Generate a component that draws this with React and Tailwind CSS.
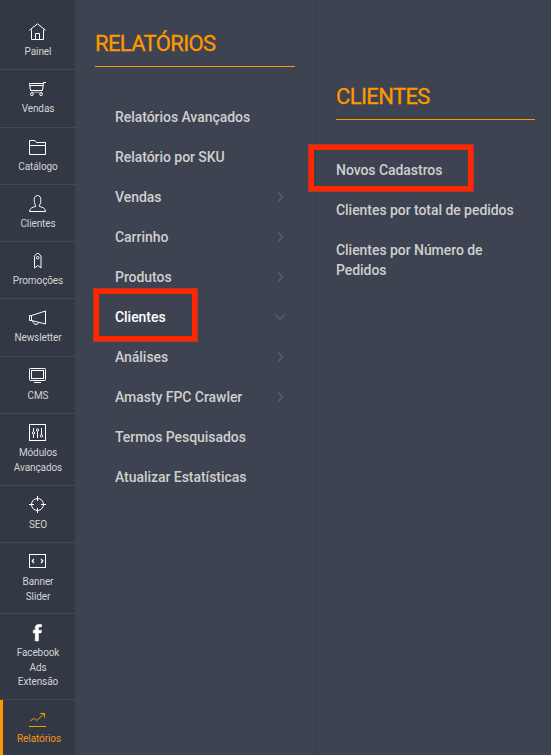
import React from 'react';
import clsx from 'clsx';

const icons = {
  home: (
    <>
      <path d="M.4 7.3 8.5.8l8.1 6.5" />
      <path d="M2.5 6.5v10h12v-10" />
      <path d="M6.5 16.5v-6h4v6" />
    </>
  ),
  cart: (
    <>
      <path d="M17 2.5h-2.5l-1 8h-12l-1-7h13.5" />
      <path d="M1 5.5h13" />
      <circle cx="2.9" cy="14.2" r="1.4" />
      <circle cx="12.1" cy="14.2" r="1.4" />
      <path d="M2 12.3h11.3" strokeWidth=".6" />
    </>
  ),
  folder: (
    <>
      <path d="M.5 16.5v-14h5.4l1.5 2h9.1v12z" />
      <path d="M.5 7.5h16" />
    </>
  ),
  user: (
    <path d="M6.6 10.2C5.4 8.8 5.2 7 5.2 4.6 5.2 2 6.4.6 8.5.6s3.3 1.4 3.3 4c0 2.4-.2 4.2-1.4 5.6v1.3c2.6.6 6 1.4 6.1 5H.5c.1-3.6 3.5-4.4 6.1-5z" />
  ),
  tag: (
    <>
      <path d="M5.500 16V4.200L7.700 1.500h2l2.300 2.700V16l-3.200-2.500z" />
      <circle cx="8.700" cy="5.700" r="1.300" />
    </>
  ),
  megaphone: (
    <>
      <path d="M2.500 6.500 16.500 2v13l-14-3.500h-2v-5z" />
      <path d="M2.500 6.500v5" />
      <path d="M3.800 12c.4 2.200 1.400 3.300 3.200 3.300 1.500 0 2.500-.6 2.900-1.900" />
    </>
  ),
  monitor: (
    <>
      <rect x=".5" y="1.500" width="16" height="12" rx=".8" />
      <rect x="2.500" y="3.500" width="12" height="8" />
      <path d="M5 15.500h7" />
    </>
  ),
  sliders: (
    <>
      <rect x=".5" y=".5" width="16" height="16" />
      <path d="M4.500 4v3.700M4.500 10.200V14M8.500 7.300V14M12.500 4v6.500" />
      <circle cx="4.500" cy="9" r="1.200" />
      <circle cx="8.500" cy="6" r="1.200" />
      <circle cx="12.500" cy="11.800" r="1.200" />
    </>
  ),
  target: (
    <>
      <circle cx="8.500" cy="8.500" r="6" />
      <path d="M8.500 0v5M8.500 12v5M0 8.500h5M12 8.500h5" />
    </>
  ),
  slider: (
    <>
      <rect x=".5" y="1.500" width="16" height="13" />
      <path d="M5 6 3.200 8 5 10M12 6l1.800 2L12 10" strokeWidth="1.200" />
    </>
  ),
  facebook: (
    <path
      fill="currentColor"
      strokeWidth=".5"
      d="M12.600.4v2.500H11c-1.200 0-1.500.6-1.500 1.400v1.900h3l-.4 2.800H9.500V17H6.200V9H4.200V6.200h2V3.900C6.200 1.400 7.900.2 10.200.2c1.100 0 2 .1 2.400.2z"
    />
  ),
  chart: (
    <>
      <path d="m1.300 11 3.500-2.700 2.900 2.200 7.700-7" />
      <path d="M11.200 3.500h4.300v4" />
      <path d="M0 16.500h17" />
    </>
  ),
};

const modules = [
  { icon: 'home', label: ['Painel'], size: 'h-[57px]' },
  { icon: 'cart', label: ['Vendas'], size: 'h-[58px]' },
  { icon: 'folder', label: ['Catálogo'], size: 'h-[57px]' },
  { icon: 'user', label: ['Clientes'], size: 'h-[57px]' },
  { icon: 'tag', label: ['Promoções'], size: 'h-[57px]' },
  { icon: 'megaphone', label: ['Newsletter'], size: 'h-[58px]' },
  { icon: 'monitor', label: ['CMS'], size: 'h-[57px]' },
  { icon: 'sliders', label: ['Módulos', 'Avançados'], size: 'h-[72px]' },
  { icon: 'target', label: ['SEO'], size: 'h-[57px]' },
  { icon: 'slider', label: ['Banner', 'Slider'], size: 'h-[71px]' },
  { icon: 'facebook', label: ['Facebook', 'Ads', 'Extensão'], size: 'h-[86px]' },
  { icon: 'chart', label: ['Relatórios'], size: 'h-[55px]', active: true },
];

const reports = [
  { label: 'Relatórios Avançados' },
  { label: 'Relatório por SKU' },
  { label: 'Vendas', children: true },
  { label: 'Carrinho', children: true },
  { label: 'Produtos', children: true },
  { label: 'Clientes', children: true, open: true },
  { label: 'Análises', children: true },
  { label: 'Amasty FPC Crawler', children: true },
  { label: 'Termos Pesquisados' },
  { label: 'Atualizar Estatísticas' },
];

const customerReports = [
  'Novos Cadastros',
  'Clientes por total de pedidos',
  'Clientes por Número de Pedidos',
];

function ModuleItem({ icon, label, size, active }) {
  return (
    <li
      className={clsx(
        'flex flex-col items-center pt-[10px]',
        size,
        active
          ? 'border-l-3 border-[#ff9800] pr-[3px] text-[#ff9800]'
          : 'border-b border-[#434956] text-white'
      )}
    >
      <svg
        width="17"
        height="18"
        viewBox="0 0 17 18"
        fill="none"
        stroke="currentColor"
        strokeWidth="1"
        className="shrink-0"
      >
        {icons[icon]}
      </svg>
      <span
        className={clsx(
          'mt-[4.2px] text-center text-[10px] leading-[14.4px] tracking-[-0.1px]',
          active ? 'pl-[3px] text-[#f7941d]' : 'pl-px text-[#d5d4d4]'
        )}
      >
        {label.map((line) => (
          <span key={line} className="block">
            {line}
          </span>
        ))}
      </span>
    </li>
  );
}

function PanelTitle({ children }) {
  return (
    <h2 className="h-[39px] border-b border-[#ff9800] pt-px text-[22px] leading-[30px] tracking-[-0.63px] text-[#ff9800] [-webkit-text-stroke:0.3px]">
      {children}
    </h2>
  );
}

function Chevron({ open }) {
  return (
    <svg
      width="12"
      height="12"
      viewBox="0 0 12 12"
      fill="none"
      stroke="#858790"
      strokeWidth=".8"
    >
      <path d={open ? 'M1.300 3.700 6 8.200l4.700-4.500' : 'm4.200 1.700 4.400 4.300-4.400 4.300'} />
    </svg>
  );
}

// Red frame drawn over a menu entry
function Highlight({ className }) {
  return (
    <span
      className={clsx(
        'pointer-events-none absolute z-10 border-[5px] border-[#ff2600] outline outline-[#a93a32]',
        className
      )}
    />
  );
}

export default function App() {
  return (
    <div className="flex h-[755px] w-[551px] overflow-hidden bg-[#3d4350] font-[Roboto,sans-serif]">
      {/* Module bar */}
      <ul className="w-[75px] shrink-0 bg-[#323844] pt-[13px]">
        {modules.map((item) => (
          <ModuleItem key={item.icon} {...item} />
        ))}
      </ul>

      {/* First level */}
      <section className="w-[241px] shrink-0 border-r border-[#343a46] px-5 pt-[28px]">
        <PanelTitle>RELATÓRIOS</PanelTitle>
        <ul className="mt-[40px] pl-5">
          {reports.map((item) => (
            <li
              key={item.label}
              className={clsx(
                'relative mb-5 flex h-5 items-center justify-between pr-[9px] text-[14px] leading-5 font-medium tracking-[-0.05px]',
                item.open ? 'text-white' : 'text-[#cfcfcf]'
              )}
            >
              {item.label}
              {item.children && <Chevron open={item.open} />}
              {item.open && <Highlight className="-top-[18px] -left-[21px] h-[52px] w-[103px]" />}
            </li>
          ))}
        </ul>
      </section>

      {/* Second level */}
      <section className="flex-1 pt-[81px] pr-4 pl-5">
        <PanelTitle>CLIENTES</PanelTitle>
        <ul className="mt-[40px]">
          {customerReports.map((label, i) => (
            <li
              key={label}
              className="relative mb-5 pr-4 text-[14px] leading-5 font-medium tracking-[-0.05px] text-[#cfcfcf]"
            >
              {label}
              {i === 0 && <Highlight className="-top-[15px] -left-[27px] h-[46px] w-[164px]" />}
            </li>
          ))}
        </ul>
      </section>
    </div>
  );
}
